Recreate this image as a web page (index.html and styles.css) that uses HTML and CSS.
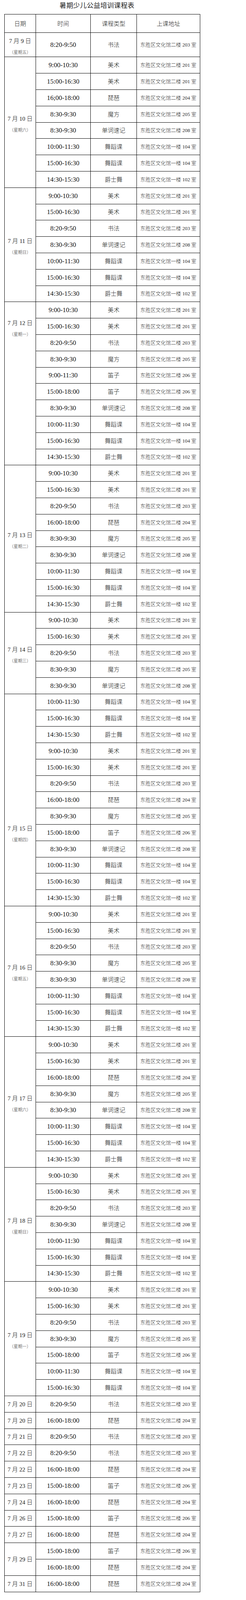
FILE: index.html
```html
<!DOCTYPE html>
<html lang="zh-CN">
<head>
<meta charset="utf-8">
<title>暑期少儿公益培训课程表</title>
<link rel="stylesheet" href="styles.css">
</head>
<body>
<div class="sheet">
  <h1 class="title">暑期少儿公益培训课程表</h1>
  <div class="schedule">
    <div class="cell head">日期</div>
    <div class="cell head">时间</div>
    <div class="cell head">课程类型</div>
    <div class="cell head">上课地址</div>

    <div class="cell date two"><span class="d">7 月 9 日</span><span class="w">（星期五）</span></div>
    <div class="cell time">8:20-9:50</div><div class="cell type">书法</div><div class="cell addr">东胜区文化馆二楼 203 室</div>

    <div class="cell date two span-8"><span class="d">7 月 10 日</span><span class="w">（星期六）</span></div>
    <div class="cell time">9:00-10:30</div><div class="cell type">美术</div><div class="cell addr">东胜区文化馆二楼 201 室</div>
    <div class="cell time">15:00-16:30</div><div class="cell type">美术</div><div class="cell addr">东胜区文化馆二楼 201 室</div>
    <div class="cell time">16;00-18:00</div><div class="cell type">琵琶</div><div class="cell addr">东胜区文化馆二楼 204 室</div>
    <div class="cell time">8:30-9:30</div><div class="cell type">魔方</div><div class="cell addr">东胜区文化馆二楼 205 室</div>
    <div class="cell time">8:30-9:30</div><div class="cell type">单词速记</div><div class="cell addr">东胜区文化馆二楼 208 室</div>
    <div class="cell time">10:00-11:30</div><div class="cell type">舞蹈课</div><div class="cell addr">东胜区文化馆一楼 104 室</div>
    <div class="cell time">15:00-16:30</div><div class="cell type">舞蹈课</div><div class="cell addr">东胜区文化馆一楼 104 室</div>
    <div class="cell time">14:30-15:30</div><div class="cell type">爵士舞</div><div class="cell addr">东胜区文化馆一楼 102 室</div>

    <div class="cell date two span-7"><span class="d">7 月 11 日</span><span class="w">（星期日）</span></div>
    <div class="cell time">9:00-10:30</div><div class="cell type">美术</div><div class="cell addr">东胜区文化馆二楼 201 室</div>
    <div class="cell time">15:00-16:30</div><div class="cell type">美术</div><div class="cell addr">东胜区文化馆二楼 201 室</div>
    <div class="cell time">8:20-9:50</div><div class="cell type">书法</div><div class="cell addr">东胜区文化馆二楼 203 室</div>
    <div class="cell time">8:30-9:30</div><div class="cell type">单词速记</div><div class="cell addr">东胜区文化馆二楼 208 室</div>
    <div class="cell time">10:00-11:30</div><div class="cell type">舞蹈课</div><div class="cell addr">东胜区文化馆一楼 104 室</div>
    <div class="cell time">15:00-16:30</div><div class="cell type">舞蹈课</div><div class="cell addr">东胜区文化馆一楼 104 室</div>
    <div class="cell time">14:30-15:30</div><div class="cell type">爵士舞</div><div class="cell addr">东胜区文化馆一楼 102 室</div>

    <div class="cell date two span-3 open"><span class="d">7 月 12 日</span><span class="w">（星期一）</span></div>
    <div class="cell time">9:00-10:30</div><div class="cell type">美术</div><div class="cell addr">东胜区文化馆二楼 201 室</div>
    <div class="cell time">15:00-16:30</div><div class="cell type">美术</div><div class="cell addr">东胜区文化馆二楼 201 室</div>
    <div class="cell time">8:20-9:50</div><div class="cell type">书法</div><div class="cell addr">东胜区文化馆二楼 203 室</div>
    <div class="cell date span-7"></div>
    <div class="cell time">8:30-9:30</div><div class="cell type">魔方</div><div class="cell addr">东胜区文化馆二楼 205 室</div>
    <div class="cell time">9:00-11:30</div><div class="cell type">笛子</div><div class="cell addr">东胜区文化馆二楼 206 室</div>
    <div class="cell time">15:00-18:00</div><div class="cell type">笛子</div><div class="cell addr">东胜区文化馆二楼 206 室</div>
    <div class="cell time">8:30-9:30</div><div class="cell type">单词速记</div><div class="cell addr">东胜区文化馆二楼 208 室</div>
    <div class="cell time">10:00-11:30</div><div class="cell type">舞蹈课</div><div class="cell addr">东胜区文化馆一楼 104 室</div>
    <div class="cell time">15:00-16:30</div><div class="cell type">舞蹈课</div><div class="cell addr">东胜区文化馆一楼 104 室</div>
    <div class="cell time">14:30-15:30</div><div class="cell type">爵士舞</div><div class="cell addr">东胜区文化馆一楼 102 室</div>

    <div class="cell date two span-9"><span class="d">7 月 13 日</span><span class="w">（星期二）</span></div>
    <div class="cell time">9:00-10:30</div><div class="cell type">美术</div><div class="cell addr">东胜区文化馆二楼 201 室</div>
    <div class="cell time">15:00-16:30</div><div class="cell type">美术</div><div class="cell addr">东胜区文化馆二楼 201 室</div>
    <div class="cell time">8:20-9:50</div><div class="cell type">书法</div><div class="cell addr">东胜区文化馆二楼 203 室</div>
    <div class="cell time">16:00-18:00</div><div class="cell type">琵琶</div><div class="cell addr">东胜区文化馆二楼 204 室</div>
    <div class="cell time">8:30-9:30</div><div class="cell type">魔方</div><div class="cell addr">东胜区文化馆二楼 205 室</div>
    <div class="cell time">8:30-9:30</div><div class="cell type">单词速记</div><div class="cell addr">东胜区文化馆二楼 208 室</div>
    <div class="cell time">10:00-11:30</div><div class="cell type">舞蹈课</div><div class="cell addr">东胜区文化馆一楼 104 室</div>
    <div class="cell time">15:00-16:30</div><div class="cell type">舞蹈课</div><div class="cell addr">东胜区文化馆一楼 104 室</div>
    <div class="cell time">14:30-15:30</div><div class="cell type">爵士舞</div><div class="cell addr">东胜区文化馆一楼 102 室</div>

    <div class="cell date two span-5"><span class="d">7 月 14 日</span><span class="w">（星期三）</span></div>
    <div class="cell time">9:00-10:30</div><div class="cell type">美术</div><div class="cell addr">东胜区文化馆二楼 201 室</div>
    <div class="cell time">15:00-16:30</div><div class="cell type">美术</div><div class="cell addr">东胜区文化馆二楼 201 室</div>
    <div class="cell time">8:20-9:50</div><div class="cell type">书法</div><div class="cell addr">东胜区文化馆二楼 203 室</div>
    <div class="cell time">8:30-9:30</div><div class="cell type">魔方</div><div class="cell addr">东胜区文化馆二楼 205 室</div>
    <div class="cell time">8:30-9:30</div><div class="cell type">单词速记</div><div class="cell addr">东胜区文化馆二楼 208 室</div>

    <div class="cell date span-3 open"></div>
    <div class="cell time">10:00-11:30</div><div class="cell type">舞蹈课</div><div class="cell addr">东胜区文化馆一楼 104 室</div>
    <div class="cell time">15:00-16:30</div><div class="cell type">舞蹈课</div><div class="cell addr">东胜区文化馆一楼 104 室</div>
    <div class="cell time">14:30-15:30</div><div class="cell type">爵士舞</div><div class="cell addr">东胜区文化馆一楼 102 室</div>
    <div class="cell date two span-10 low"><span class="d">7 月 15 日</span><span class="w">（星期四）</span></div>
    <div class="cell time">9:00-10:30</div><div class="cell type">美术</div><div class="cell addr">东胜区文化馆二楼 201 室</div>
    <div class="cell time">15:00-16:30</div><div class="cell type">美术</div><div class="cell addr">东胜区文化馆二楼 201 室</div>
    <div class="cell time">8:20-9:50</div><div class="cell type">书法</div><div class="cell addr">东胜区文化馆二楼 203 室</div>
    <div class="cell time">16:00-18:00</div><div class="cell type">琵琶</div><div class="cell addr">东胜区文化馆二楼 204 室</div>
    <div class="cell time">8:30-9:30</div><div class="cell type">魔方</div><div class="cell addr">东胜区文化馆二楼 205 室</div>
    <div class="cell time">15:00-18:00</div><div class="cell type">笛子</div><div class="cell addr">东胜区文化馆二楼 206 室</div>
    <div class="cell time">8:30-9:30</div><div class="cell type">单词速记</div><div class="cell addr">东胜区文化馆二楼 208 室</div>
    <div class="cell time">10:00-11:30</div><div class="cell type">舞蹈课</div><div class="cell addr">东胜区文化馆一楼 104 室</div>
    <div class="cell time">15:00-16:30</div><div class="cell type">舞蹈课</div><div class="cell addr">东胜区文化馆一楼 104 室</div>
    <div class="cell time">14:30-15:30</div><div class="cell type">爵士舞</div><div class="cell addr">东胜区文化馆一楼 102 室</div>

    <div class="cell date two span-8"><span class="d">7 月 16 日</span><span class="w">（星期五）</span></div>
    <div class="cell time">9:00-10:30</div><div class="cell type">美术</div><div class="cell addr">东胜区文化馆二楼 201 室</div>
    <div class="cell time">15:00-16:30</div><div class="cell type">美术</div><div class="cell addr">东胜区文化馆二楼 201 室</div>
    <div class="cell time">8:20-9:50</div><div class="cell type">书法</div><div class="cell addr">东胜区文化馆二楼 203 室</div>
    <div class="cell time">8:30-9:30</div><div class="cell type">魔方</div><div class="cell addr">东胜区文化馆二楼 205 室</div>
    <div class="cell time">8:30-9:30</div><div class="cell type">单词速记</div><div class="cell addr">东胜区文化馆二楼 208 室</div>
    <div class="cell time">10:00-11:30</div><div class="cell type">舞蹈课</div><div class="cell addr">东胜区文化馆一楼 104 室</div>
    <div class="cell time">15:00-16:30</div><div class="cell type">舞蹈课</div><div class="cell addr">东胜区文化馆一楼 104 室</div>
    <div class="cell time">14:30-15:30</div><div class="cell type">爵士舞</div><div class="cell addr">东胜区文化馆一楼 102 室</div>

    <div class="cell date two span-8"><span class="d">7 月 17 日</span><span class="w">（星期六）</span></div>
    <div class="cell time">9:00-10:30</div><div class="cell type">美术</div><div class="cell addr">东胜区文化馆二楼 201 室</div>
    <div class="cell time">15:00-16:30</div><div class="cell type">美术</div><div class="cell addr">东胜区文化馆二楼 201 室</div>
    <div class="cell time">16:00-18:00</div><div class="cell type">琵琶</div><div class="cell addr">东胜区文化馆二楼 204 室</div>
    <div class="cell time">8:30-9:30</div><div class="cell type">魔方</div><div class="cell addr">东胜区文化馆二楼 205 室</div>
    <div class="cell time">8:30-9:30</div><div class="cell type">单词速记</div><div class="cell addr">东胜区文化馆二楼 208 室</div>
    <div class="cell time">10:00-11:30</div><div class="cell type">舞蹈课</div><div class="cell addr">东胜区文化馆一楼 104 室</div>
    <div class="cell time">15:00-16:30</div><div class="cell type">舞蹈课</div><div class="cell addr">东胜区文化馆一楼 104 室</div>
    <div class="cell time">14:30-15:30</div><div class="cell type">爵士舞</div><div class="cell addr">东胜区文化馆一楼 102 室</div>

    <div class="cell date two span-7"><span class="d">7 月 18 日</span><span class="w">（星期日）</span></div>
    <div class="cell time">9:00-10:30</div><div class="cell type">美术</div><div class="cell addr">东胜区文化馆二楼 201 室</div>
    <div class="cell time">15:00-16:30</div><div class="cell type">美术</div><div class="cell addr">东胜区文化馆二楼 201 室</div>
    <div class="cell time">8:20-9:50</div><div class="cell type">书法</div><div class="cell addr">东胜区文化馆二楼 203 室</div>
    <div class="cell time">8:30-9:30</div><div class="cell type">单词速记</div><div class="cell addr">东胜区文化馆二楼 208 室</div>
    <div class="cell time">10:00-11:30</div><div class="cell type">舞蹈课</div><div class="cell addr">东胜区文化馆一楼 104 室</div>
    <div class="cell time">15:00-16:30</div><div class="cell type">舞蹈课</div><div class="cell addr">东胜区文化馆一楼 104 室</div>
    <div class="cell time">14:30-15:30</div><div class="cell type">爵士舞</div><div class="cell addr">东胜区文化馆一楼 102 室</div>

    <div class="cell date two span-7"><span class="d">7 月 19 日</span><span class="w">（星期一）</span></div>
    <div class="cell time">9:00-10:30</div><div class="cell type">美术</div><div class="cell addr">东胜区文化馆二楼 201 室</div>
    <div class="cell time">15:00-16:30</div><div class="cell type">美术</div><div class="cell addr">东胜区文化馆二楼 201 室</div>
    <div class="cell time">8:20-9:50</div><div class="cell type">书法</div><div class="cell addr">东胜区文化馆二楼 203 室</div>
    <div class="cell time">8:30-9:30</div><div class="cell type">魔方</div><div class="cell addr">东胜区文化馆二楼 205 室</div>
    <div class="cell time">15:00-18:00</div><div class="cell type">笛子</div><div class="cell addr">东胜区文化馆二楼 206 室</div>
    <div class="cell time">10:00-11:30</div><div class="cell type">舞蹈课</div><div class="cell addr">东胜区文化馆一楼 104 室</div>
    <div class="cell time">15:00-16:30</div><div class="cell type">舞蹈课</div><div class="cell addr">东胜区文化馆一楼 104 室</div>

    <div class="cell date"><span class="d">7 月 20 日</span></div>
    <div class="cell time">8:20-9:50</div><div class="cell type">书法</div><div class="cell addr">东胜区文化馆二楼 203 室</div>
    <div class="cell date"><span class="d">7 月 20 日</span></div>
    <div class="cell time">16:00-18:00</div><div class="cell type">琵琶</div><div class="cell addr">东胜区文化馆二楼 204 室</div>
    <div class="cell date"><span class="d">7 月 21 日</span></div>
    <div class="cell time">8:20-9:50</div><div class="cell type">书法</div><div class="cell addr">东胜区文化馆二楼 203 室</div>
    <div class="cell date"><span class="d">7 月 22 日</span></div>
    <div class="cell time">8:20-9:50</div><div class="cell type">书法</div><div class="cell addr">东胜区文化馆二楼 203 室</div>
    <div class="cell date"><span class="d">7 月 22 日</span></div>
    <div class="cell time">16:00-18:00</div><div class="cell type">琵琶</div><div class="cell addr">东胜区文化馆二楼 204 室</div>
    <div class="cell date"><span class="d">7 月 23 日</span></div>
    <div class="cell time">15:00-18:00</div><div class="cell type">笛子</div><div class="cell addr">东胜区文化馆二楼 206 室</div>
    <div class="cell date"><span class="d">7 月 24 日</span></div>
    <div class="cell time">16:00-18:00</div><div class="cell type">琵琶</div><div class="cell addr">东胜区文化馆二楼 204 室</div>
    <div class="cell date"><span class="d">7 月 26 日</span></div>
    <div class="cell time">15:00-18:00</div><div class="cell type">笛子</div><div class="cell addr">东胜区文化馆二楼 206 室</div>
    <div class="cell date"><span class="d">7 月 27 日</span></div>
    <div class="cell time">16:00-18:00</div><div class="cell type">琵琶</div><div class="cell addr">东胜区文化馆二楼 204 室</div>
    <div class="cell date span-2"><span class="d">7 月 29 日</span></div>
    <div class="cell time">15:00-18:00</div><div class="cell type">笛子</div><div class="cell addr">东胜区文化馆二楼 206 室</div>
    <div class="cell time">16:00-18:00</div><div class="cell type">琵琶</div><div class="cell addr">东胜区文化馆二楼 204 室</div>
    <div class="cell date"><span class="d">7 月 31 日</span></div>
    <div class="cell time">16:00-18:00</div><div class="cell type">琵琶</div><div class="cell addr">东胜区文化馆二楼 204 室</div>
  </div>
</div>
</body>
</html>
```

FILE: styles.css
```css
html, body {
  margin: 0;
  padding: 0;
  background: #fff;
}

body {
  font-family: "Liberation Serif", "Noto Sans CJK SC", serif;
  color: #151515;
}

.sheet {
  padding: 0 0 0 11px;
}

.title {
  margin: 0 0 6px 0;
  width: 501px;
  box-sizing: border-box;
  padding-right: 27px;
  height: 30px;
  line-height: 30px;
  font-size: 17px;
  font-weight: 400;
  letter-spacing: 0.4px;
  text-align: center;
  color: #222;
}

.schedule {
  display: grid;
  grid-template-columns: 80px 140px 118px 162px;
  grid-template-rows: 47px 62px;
  grid-auto-rows: 42px 42px 42px 42px 41px;
  width: max-content;
  border-left: 1px solid #000;
  border-top: 1px solid #000;
}

.cell {
  box-sizing: border-box;
  min-height: 0;
  min-width: 0;
  border-right: 1px solid #000;
  border-bottom: 1px solid #000;
  display: flex;
  align-items: center;
  justify-content: center;
  white-space: nowrap;
  line-height: 20px;
}

.head {
  font-size: 15px;
  font-weight: 300;
  color: #222;
  padding-top: 1px;
}

.date {
  grid-column: 1;
  flex-direction: column;
}

.date .d {
  font-size: 15px;
  line-height: 22px;
  font-weight: 300;
}

.date .w {
  font-size: 11px;
  line-height: 18px;
  margin-top: 9px;
  font-weight: 300;
  color: #333;
}

.date.two {
  padding-top: 8px;
}

.date.low {
  padding-top: 48px;
}

.date.open {
  border-bottom: none;
}

.span-2 { grid-row: span 2; }
.span-3 { grid-row: span 3; }
.span-5 { grid-row: span 5; }
.span-7 { grid-row: span 7; }
.span-8 { grid-row: span 8; }
.span-9 { grid-row: span 9; }
.span-10 { grid-row: span 10; }

.time {
  grid-column: 2;
  font-size: 17px;
  color: #111;
}

.type {
  grid-column: 3;
  font-size: 15px;
  font-weight: 300;
  color: #1a1a1a;
}

.addr {
  grid-column: 4;
  font-size: 13px;
  font-weight: 300;
  color: #2a2a2a;
}
```
